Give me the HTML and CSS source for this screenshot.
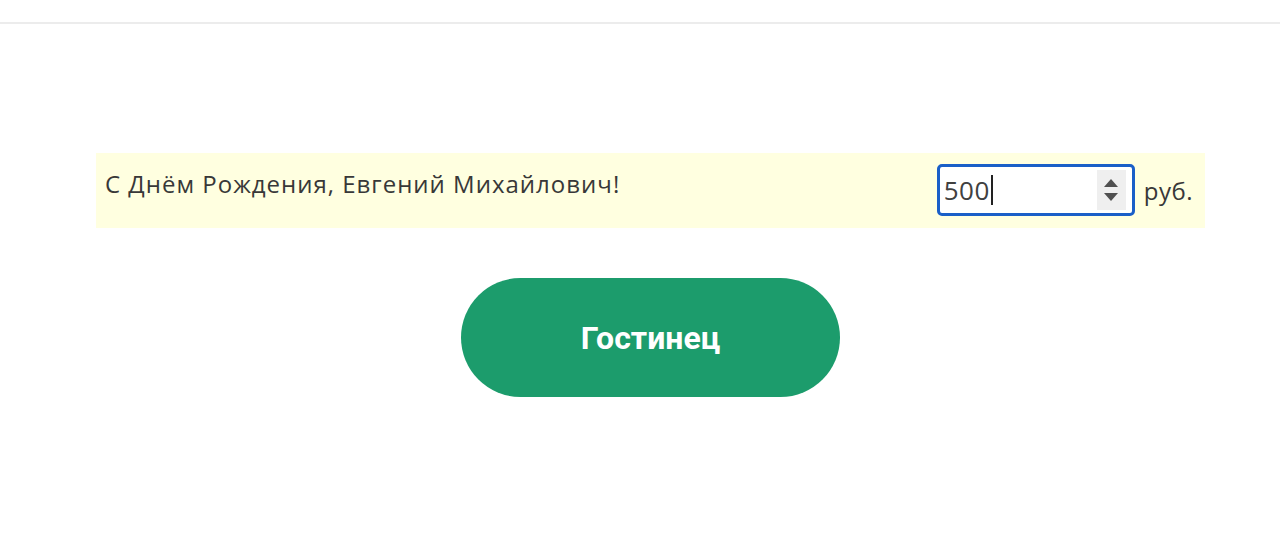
FILE: index.html
```html
<!DOCTYPE html>
<html lang="ru">
<head>
    <meta charset="UTF-8">
    <meta name="viewport" content="width=device-width, initial-scale=1.0">
    <title>Гостинец</title>
    <link rel="stylesheet" href="styles.css">
</head>
<body>
    <div class="topbar"></div>
    <div class="page">
        <form class="gift-form">
            <div class="gift-row">
                <p class="greeting">С Днём Рождения, Евгений Михайлович!</p>
                <div class="amount">
                    <span class="amount-value">500<span class="caret"></span></span>
                    <span class="spinner">
                        <span class="arrow up"></span>
                        <span class="arrow down"></span>
                    </span>
                </div>
                <span class="currency">руб.</span>
            </div>
            <div class="actions">
                <button type="submit" class="gift-btn">Гостинец</button>
            </div>
        </form>
    </div>
</body>
</html>
```

FILE: styles.css
```css
body {
    margin: 0;
    background: #fff;
    font-family: "Open Sans", "Noto Sans", sans-serif;
    color: #333;
}

.topbar {
    height: 22px;
    border-bottom: 2px solid #ececec;
}

.page {
    padding-top: 129px;
}

.gift-form {
    width: 1109px;
    margin-left: 96px;
}

.gift-row {
    display: flex;
    align-items: center;
    box-sizing: border-box;
    padding: 11px 12px 12px 9px;
    background: #ffffe0;
}

.greeting {
    flex: 1;
    align-self: flex-start;
    margin: 0;
    padding-top: 3px;
    font-size: 24px;
    line-height: 33px;
    letter-spacing: 1px;
    color: #383838;
}

.amount {
    display: flex;
    align-items: center;
    width: 198px;
    height: 52px;
    box-sizing: border-box;
    padding: 0 6px 0 4px;
    border: 3px solid #1a5fc8;
    border-radius: 5px;
    background: #fff;
}

.amount-value {
    flex: 1;
    font-size: 26px;
    letter-spacing: 0.5px;
    color: #404040;
    display: flex;
    align-items: center;
}

.caret {
    display: inline-block;
    width: 2px;
    height: 30px;
    margin-left: 1px;
    background: #222;
}

.spinner {
    display: flex;
    flex-direction: column;
    justify-content: center;
    align-items: center;
    gap: 6px;
    width: 29px;
    height: 40px;
    background: #efefef;
}

.arrow {
    width: 0;
    height: 0;
    border-left: 7px solid transparent;
    border-right: 7px solid transparent;
}

.arrow.up {
    border-bottom: 8px solid #505050;
}

.arrow.down {
    border-top: 8px solid #505050;
}

.currency {
    margin-left: 9px;
    font-size: 24px;
    letter-spacing: 0.5px;
    color: #383838;
}

.actions {
    display: flex;
    justify-content: center;
    margin-top: 50px;
}

.gift-btn {
    width: 379px;
    height: 119px;
    border: none;
    border-radius: 60px;
    background: #1c9c6c;
    color: #fff;
    font-family: Roboto, sans-serif;
    font-weight: bold;
    font-size: 32px;
    cursor: pointer;
}
```
